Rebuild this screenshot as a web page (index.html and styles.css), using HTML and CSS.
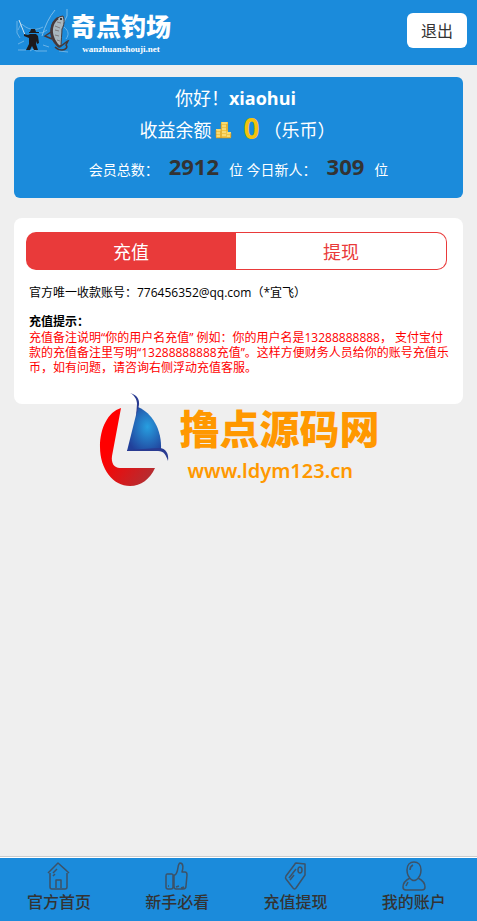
FILE: index.html
```html
<!DOCTYPE html>
<html lang="zh-CN">
<head>
  <meta charset="UTF-8">
  <meta name="viewport" content="width=device-width, initial-scale=1.0">
  <title>充值提现</title>
  <link rel="stylesheet" href="styles.css">
</head>
<body>
  <header class="header">
    <div class="logo">
      <svg class="logo-pic" width="54" height="46" viewBox="0 0 54 46" fill="none">
        <path d="M39 2C33 9 29 18 26 28M51 1v7l-3 6" stroke="#7dbdea"/>
        <path d="M1 13v12l3 5M2 22c2-4 3-7 5-5 7 6 14 5 20 2M22 24c4 2 6 0 9-2M48 19c5 4 5 8 2 12M2 36l6-3M2 42h8M14 43l3-2 3 2h11M27 37l6 2M43 43l9 1" stroke="#7dbdea" stroke-width=".8"/>
        <path d="M3 12l6 15" stroke="#d4e6f2"/>
        <path d="M15 21h4l1 3h3v1H13v-1h1zM14 26h6l2 2 1 7-2 1-1-3v3l2 6h-4l-2-4-2 4h-4l3-6v-6l-5-2v-2l4 1z" fill="#1d1a1b"/>
        <path d="M47 8c2 5 1 9-1 13 0 5-1 11-1 18-5-1-9-6-10-12-1-9 3-18 12-19z" fill="#a9b7bf" stroke="#45383a"/>
        <path d="M42 10c-7 5-8 14-4 22 2 4 4 6 6 7" stroke="#45383a" stroke-width="2.5"/>
        <path d="M35 24l-6 4 7 3M44 38c3 0 5-4 8-5l-2 4c2 2 0 5-4 5-3 0-5-1-7-3" stroke="#45383a" stroke-width="1.5"/>
        <path d="M41 14l4 1M39 18l5 2M39 22l4 1M39 27l4 1M41 32l3 1" stroke="#756b6c" stroke-width=".8"/>
        <circle cx="45" cy="11" r="1" fill="#111"/>
      </svg>
      <div class="logo-text">
        <div class="logo-name">奇点钓场</div>
        <div class="logo-url">wanzhuanshouji.net</div>
      </div>
    </div>
    <button class="logout" type="button">退出</button>
  </header>

  <main class="main">
    <section class="account">
      <div class="hello">你好！<b>xiaohui</b></div>
      <div class="balance">
        <span>收益余额</span>
        <svg class="coins" width="17" height="17" viewBox="0 0 17 17">
          <path d="M6 0h7v16H6zM1 7h6v9H1zM11 10h5v6h-5z" fill="#f0c445"/>
          <path d="M7 1h5M7 4h4M7 7h4M7 10h4M7 13h4M1 8h5M1 11h4M1 14h4M12 11h4M12 14h3" stroke="#fff1a2"/>
          <path d="M6 2v14M12 2v7M1 8v7M16 11v4M1 16h15" stroke="#c88b18" stroke-width=".6"/>
        </svg>
        <b class="money">0</b>
        <span>（乐币）</span>
      </div>
      <div class="stats">
        会员总数：<b>2912</b>位 今日新人：<b>309</b>位
      </div>
    </section>

    <section class="card">
      <div class="tabs">
        <button class="tab active" type="button">充值</button>
        <button class="tab" type="button">提现</button>
      </div>
      <div class="info">
        <p>官方唯一收款账号：776456352@qq.com（*宜飞）</p>
        <h2>充值提示：</h2>
        <p class="tips">充值备注说明“你的用户名充值” 例如：你的用户名是13288888888， 支付宝付款的充值备注里写明“13288888888充值”。这样方便财务人员给你的账号充值乐币，如有问题，请咨询右侧浮动充值客服。</p>
      </div>
    </section>
  </main>

  <div class="watermark">
    <svg width="72" height="96" viewBox="0 0 72 96">
      <defs>
        <linearGradient id="red" x1="0" y1="0" x2="1" y2="1">
          <stop offset=".35" stop-color="#f00"/>
          <stop offset="1" stop-color="#a8353a"/>
        </linearGradient>
        <radialGradient id="blue" cx=".6" cy=".45" r=".65">
          <stop offset="0" stop-color="#279fe0"/>
          <stop offset="1" stop-color="#21409a"/>
        </radialGradient>
      </defs>
      <path d="M23 16C10 20 2 36 2 55c0 22 13 39 30 39 11 0 20-7 25-18H22c-6 0-9-5-8-12z" fill="url(#red)"/>
      <path d="M29 59l11-44c14 6 24 22 23 43z" fill="url(#blue)"/>
      <path d="M32 1c8 2 11 8 8 16l-2 8 1-13c0-5-3-9-7-11zM61 56c7 0 10 6 9 13-2-6-4-10-10-10H29v-1z" fill="#293b91"/>
    </svg>
    <div class="watermark-text">
      <div class="watermark-name">撸点源码网</div>
      <div class="watermark-url">www.ldym123.cn</div>
    </div>
  </div>

  <nav class="nav">
    <a href="#">
      <svg width="28" height="30" viewBox="0 0 28 30">
        <path d="M5 12v14q0 2 2 2h13q2 0 2-2V12M3 12L13 2l11 10M5 10l8-8 9 8M11 27v-8h5v8M8 12l4-4M8 15l2-2"/>
      </svg>
      <span>官方首页</span>
    </a>
    <a href="#">
      <svg width="28" height="30" viewBox="0 0 28 30">
        <path d="M4 13h5q1 0 1 2v11q0 2-2 2H5q-2 0-2-2V15q0-2 1-2zM12 14c4-3 2-11 5-12 4 0 3 6 2 9h3q2 0 2 3l-1 11q0 3-3 3h-7q-2 0-2-3V14zM5 25h1M13 26l3-1M18 27l3-1"/>
      </svg>
      <span>新手必看</span>
    </a>
    <a href="#">
      <svg width="28" height="30" viewBox="0 0 28 30">
        <path d="M14 2l9 1v11l-9 13q-1 2-3 0l-7-9q-1-1 0-3L13 3q0-1 1-1zM7 17l7-9M8 19l4-5"/>
        <ellipse cx="18" cy="9" rx="2" ry="3"/>
      </svg>
      <span>充值提现</span>
    </a>
    <a href="#">
      <svg width="28" height="30" viewBox="0 0 28 30">
        <path d="M14 1c-4 0-7 3-7 8 0 4 2 8 5 10q2 1 4 0c3-2 5-6 5-10 0-5-3-8-7-8zM10 17c-4 2-7 5-7 9 0 2 1 3 3 3h16c2 0 3-1 3-3 0-4-3-7-7-9M10 9c0-2 1-4 3-5M6 25l2-4"/>
      </svg>
      <span>我的账户</span>
    </a>
  </nav>
</body>
</html>
```

FILE: styles.css
```css
* {
  box-sizing: border-box;
}

body {
  margin: 0;
  min-height: 100vh;
  background: #efefef;
  color: #000;
  font-family: "Open Sans", "Noto Sans CJK SC", sans-serif;
  font-size: 12px;
}

button {
  font-family: inherit;
  cursor: pointer;
}

.header {
  display: flex;
  justify-content: space-between;
  align-items: center;
  height: 65px;
  padding: 0 10px 4px 16px;
  background: #1b8bdb;
}

.logo {
  display: flex;
  align-items: center;
  gap: 1px;
}

.logo-text {
  color: #fff;
  text-align: center;
}

.logo-name {
  font-size: 25px;
  font-weight: 900;
  line-height: 36px;
}

.logo-url {
  font-family: "Liberation Serif", serif;
  font-size: 9px;
  font-weight: bold;
  line-height: 10px;
}

.logout {
  width: 60px;
  height: 35px;
  padding: 0 0 2px;
  border: none;
  border-radius: 6px;
  background: #fff;
  color: #333;
  font-size: 16px;
}

.main {
  padding: 12px 14px;
}

.account {
  height: 121px;
  padding-top: 7px;
  border-radius: 6px;
  background: #1b8bdb;
  color: #fff;
  text-align: center;
}

.hello {
  padding-right: 6px;
  font-size: 18px;
  line-height: 28px;
}

.balance {
  display: flex;
  justify-content: center;
  align-items: center;
  padding-right: 2px;
  font-size: 18px;
  line-height: 32px;
}

.coins {
  margin-left: 4px;
}

.money {
  margin: 0 4px 4px 11px;
  color: #f4c20d;
  font-size: 28px;
}

.stats {
  font-size: 14px;
  line-height: 36px;
}

.stats b {
  margin: 0 10px;
  color: #333;
  font-size: 22px;
}

.card {
  margin-top: 20px;
  padding: 14px 14px 29px 12px;
  border-radius: 8px;
  background: #fff;
}

.tabs {
  display: flex;
  height: 38px;
  margin-right: 2px;
}

.tab {
  flex: 1;
  padding: 0;
  border: 1px solid #e93a3a;
  border-left: none;
  border-radius: 0 10px 10px 0;
  background: #fff;
  color: #e93a3a;
  font-size: 18px;
}

.tab.active {
  border: none;
  border-radius: 10px 0 0 10px;
  background: #e93a3a;
  color: #fff;
}

.info {
  padding: 15px 0 0 3px;
  line-height: 15px;
}

.info p,
.info h2 {
  margin: 0;
  font-size: 12px;
}

.info h2 {
  margin: 14px 0 1px;
}

.info .tips {
  color: #f00;
}

/* site mark, floats over the card */
.watermark {
  position: absolute;
  top: 392px;
  left: 0;
  right: 0;
  display: flex;
  justify-content: center;
  gap: 10px;
  color: #ff9800;
  pointer-events: none;
}

.watermark-text {
  padding-top: 11px;
}

.watermark-name {
  font-size: 40px;
  font-weight: 900;
  line-height: 52px;
}

.watermark-url {
  padding-left: 8px;
  font-family: "Noto Sans", sans-serif;
  font-size: 20px;
  font-weight: 600;
  line-height: 32px;
}

.nav {
  position: fixed;
  bottom: 0;
  left: 0;
  right: 0;
  display: flex;
  height: 65px;
  padding: 4px 4px 0 0;
  border-top: 1px solid #ccc;
  background: #1b8bdb;
  box-shadow: inset 0 1px #fff;
}

.nav a {
  flex: 1;
  display: flex;
  flex-direction: column;
  align-items: center;
  color: #333;
  font-size: 16px;
  font-weight: 500;
  line-height: 22px;
  text-decoration: none;
}

.nav svg {
  fill: none;
  stroke: #3d5267;
  stroke-width: 1.5;
  stroke-linejoin: round;
}
```
